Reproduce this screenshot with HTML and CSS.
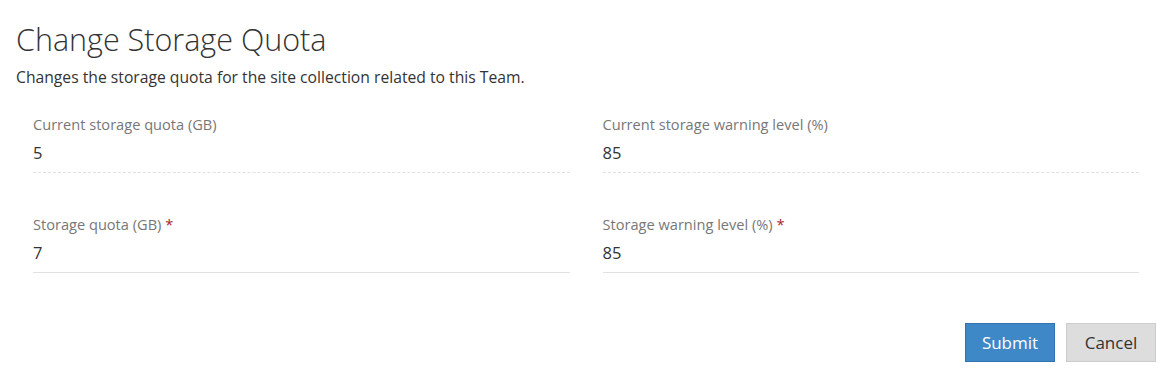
FILE: index.html
```html
<!DOCTYPE html>
<html lang="en">

<head>
    <meta charset="UTF-8">
    <meta name="viewport" content="width=device-width, initial-scale=1.0">
    <title>Change Storage Quota</title>
    <link rel="stylesheet" href="styles.css">
</head>

<body>

    <div class="painel">
        <h1 class="titulo">Change Storage Quota</h1>
        <p class="descricao">Changes the storage quota for the site collection related to this Team.</p>

        <div class="campos">
            <div class="campo somente-leitura">
                <label class="rotulo">Current storage quota (GB)</label>
                <div class="valor">5</div>
            </div>
            <div class="campo somente-leitura">
                <label class="rotulo">Current storage warning level (%)</label>
                <div class="valor">85</div>
            </div>
            <div class="campo">
                <label class="rotulo">Storage quota (GB) <span class="obrigatorio">*</span></label>
                <input class="valor entrada" type="text" value="7">
            </div>
            <div class="campo">
                <label class="rotulo">Storage warning level (%) <span class="obrigatorio">*</span></label>
                <input class="valor entrada" type="text" value="85">
            </div>
        </div>

        <div class="acoes">
            <button class="botao enviar">Submit</button>
            <button class="botao cancelar">Cancel</button>
        </div>
    </div>

</body>

</html>
```

FILE: styles.css
```css
body {
    margin: 0;
    background-color: #ffffff;
    font-family: "Open Sans", "Liberation Sans", sans-serif;
    color: #333333;
}

.painel {
    padding: 16px;
}

.titulo {
    margin: 3px 0 0 0;
    font-size: 30.5px;
    font-weight: 300;
    line-height: 40px;
    color: #333333;
}

.descricao {
    margin: 7px 0 0 0;
    font-size: 15.7px;
    line-height: 22px;
    color: #333333;
}

.campos {
    display: grid;
    grid-template-columns: 1fr 1fr;
    column-gap: 33px;
    row-gap: 41px;
    margin: 26px 17px 0 17px;
}

.campo {
    display: flex;
    flex-direction: column;
}

.rotulo {
    font-size: 14.6px;
    line-height: 20px;
    color: #777777;
}

.obrigatorio {
    color: #a4262c;
}

.valor {
    margin-top: 7px;
    padding: 0 0 7px 0;
    height: 24px;
    font-size: 16.5px;
    line-height: 24px;
    color: #333333;
    border-bottom: 1px solid #e1e1e1;
}

.somente-leitura .valor {
    border-bottom: 1px dashed #e1e1e1;
}

.entrada {
    border: none;
    border-bottom: 1px solid #e1e1e1;
    font-family: inherit;
    background: transparent;
    outline: none;
}

.acoes {
    display: flex;
    justify-content: flex-end;
    gap: 11px;
    margin-top: 50px;
}

.botao {
    width: 90px;
    height: 39px;
    font-family: inherit;
    font-size: 17px;
    cursor: pointer;
}

.enviar {
    background-color: #3e88c8;
    border: 1px solid #2f73b0;
    color: #ffffff;
}

.cancelar {
    background-color: #dddddd;
    border: 1px solid #cccccc;
    color: #333333;
}
```
